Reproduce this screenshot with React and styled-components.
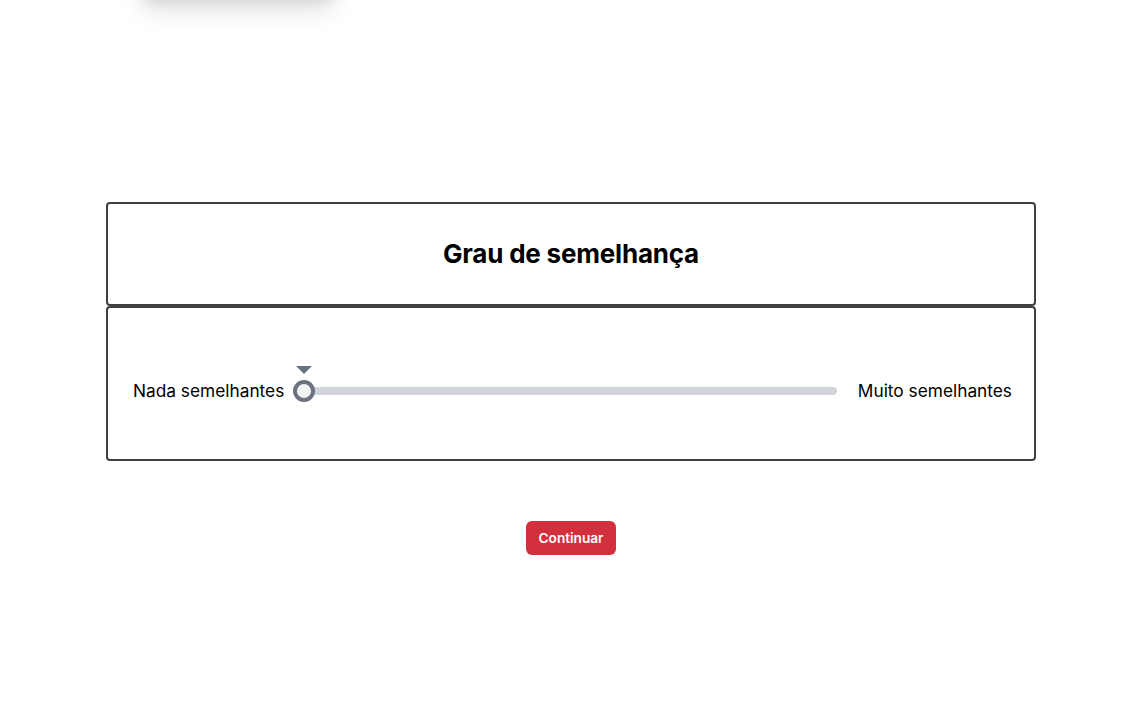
import React, { useState } from "react";
import styled, { createGlobalStyle } from "styled-components";

const GlobalStyle = createGlobalStyle`
  html, body {
    margin: 0;
    padding: 0;
    background: #ffffff;
    font-family: Inter, "Liberation Sans", sans-serif;
    color: #000;
  }
`;

const Page = styled.div`
  position: relative;
  min-height: 718px;
  overflow: hidden;
  display: flex;
  flex-direction: column;
  align-items: center;
  padding: 202px 0 0 8px;
  box-sizing: border-box;
`;

const GhostToast = styled.div`
  position: absolute;
  left: 140px;
  top: -80px;
  width: 195px;
  height: 80px;
  border-radius: 12px;
  background: #fff;
  box-shadow: 0 10px 25px rgba(0, 0, 0, 0.12), 0 4px 10px rgba(0, 0, 0, 0.05);
`;

const Card = styled.section`
  width: 930px;
  box-sizing: border-box;
  border: 2px solid #404040;
  border-radius: 4px;
  height: ${(p) => p.$height}px;
  display: flex;
  align-items: center;
  justify-content: center;
`;

const Title = styled.h2`
  margin: 0 0 2px;
  font-size: 26px;
  font-weight: 700;
  letter-spacing: -0.2px;
`;

const SliderRow = styled.div`
  width: 100%;
  padding: 0 22px 0 25px;
  box-sizing: border-box;
  display: flex;
  align-items: center;
  gap: 9px;
  margin-top: 14px;
`;

const Label = styled.span`
  font-size: 17.3px;
  white-space: nowrap;
`;

const Track = styled.div`
  position: relative;
  flex: 1;
  height: 8px;
  border-radius: 4px;
  background: #d1d5db;
  margin-right: 12px;
`;

const Thumb = styled.div`
  position: absolute;
  top: 50%;
  left: ${(p) => p.$pos}%;
  width: 22px;
  height: 22px;
  box-sizing: border-box;
  border-radius: 50%;
  border: 4px solid #6b7280;
  background: #f3f4f6;
  transform: translate(-11px, -50%);
  margin-left: 11px;
`;

const Marker = styled.div`
  position: absolute;
  left: 50%;
  top: -18px;
  transform: translateX(-50%);
  width: 0;
  height: 0;
  border-left: 8px solid transparent;
  border-right: 8px solid transparent;
  border-top: 8px solid #6b7280;
`;

const Actions = styled.div`
  margin-top: 60px;
`;

const Button = styled.button`
  border: none;
  border-radius: 6px;
  background: #d3303d;
  color: #fff;
  font-family: Inter, "Liberation Sans", sans-serif;
  font-size: 13.6px;
  font-weight: 600;
  height: 34px;
  padding: 0 13px;
  cursor: pointer;
`;

export default function App() {
  const [value] = useState(0);

  return (
    <Page>
      <GlobalStyle />
      <GhostToast />
      <Card $height={104}>
        <Title>Grau de semelhança</Title>
      </Card>
      <Card $height={155}>
        <SliderRow>
          <Label>Nada semelhantes</Label>
          <Track>
            <Thumb $pos={value}>
              <Marker />
            </Thumb>
          </Track>
          <Label>Muito semelhantes</Label>
        </SliderRow>
      </Card>
      <Actions>
        <Button>Continuar</Button>
      </Actions>
    </Page>
  );
}
